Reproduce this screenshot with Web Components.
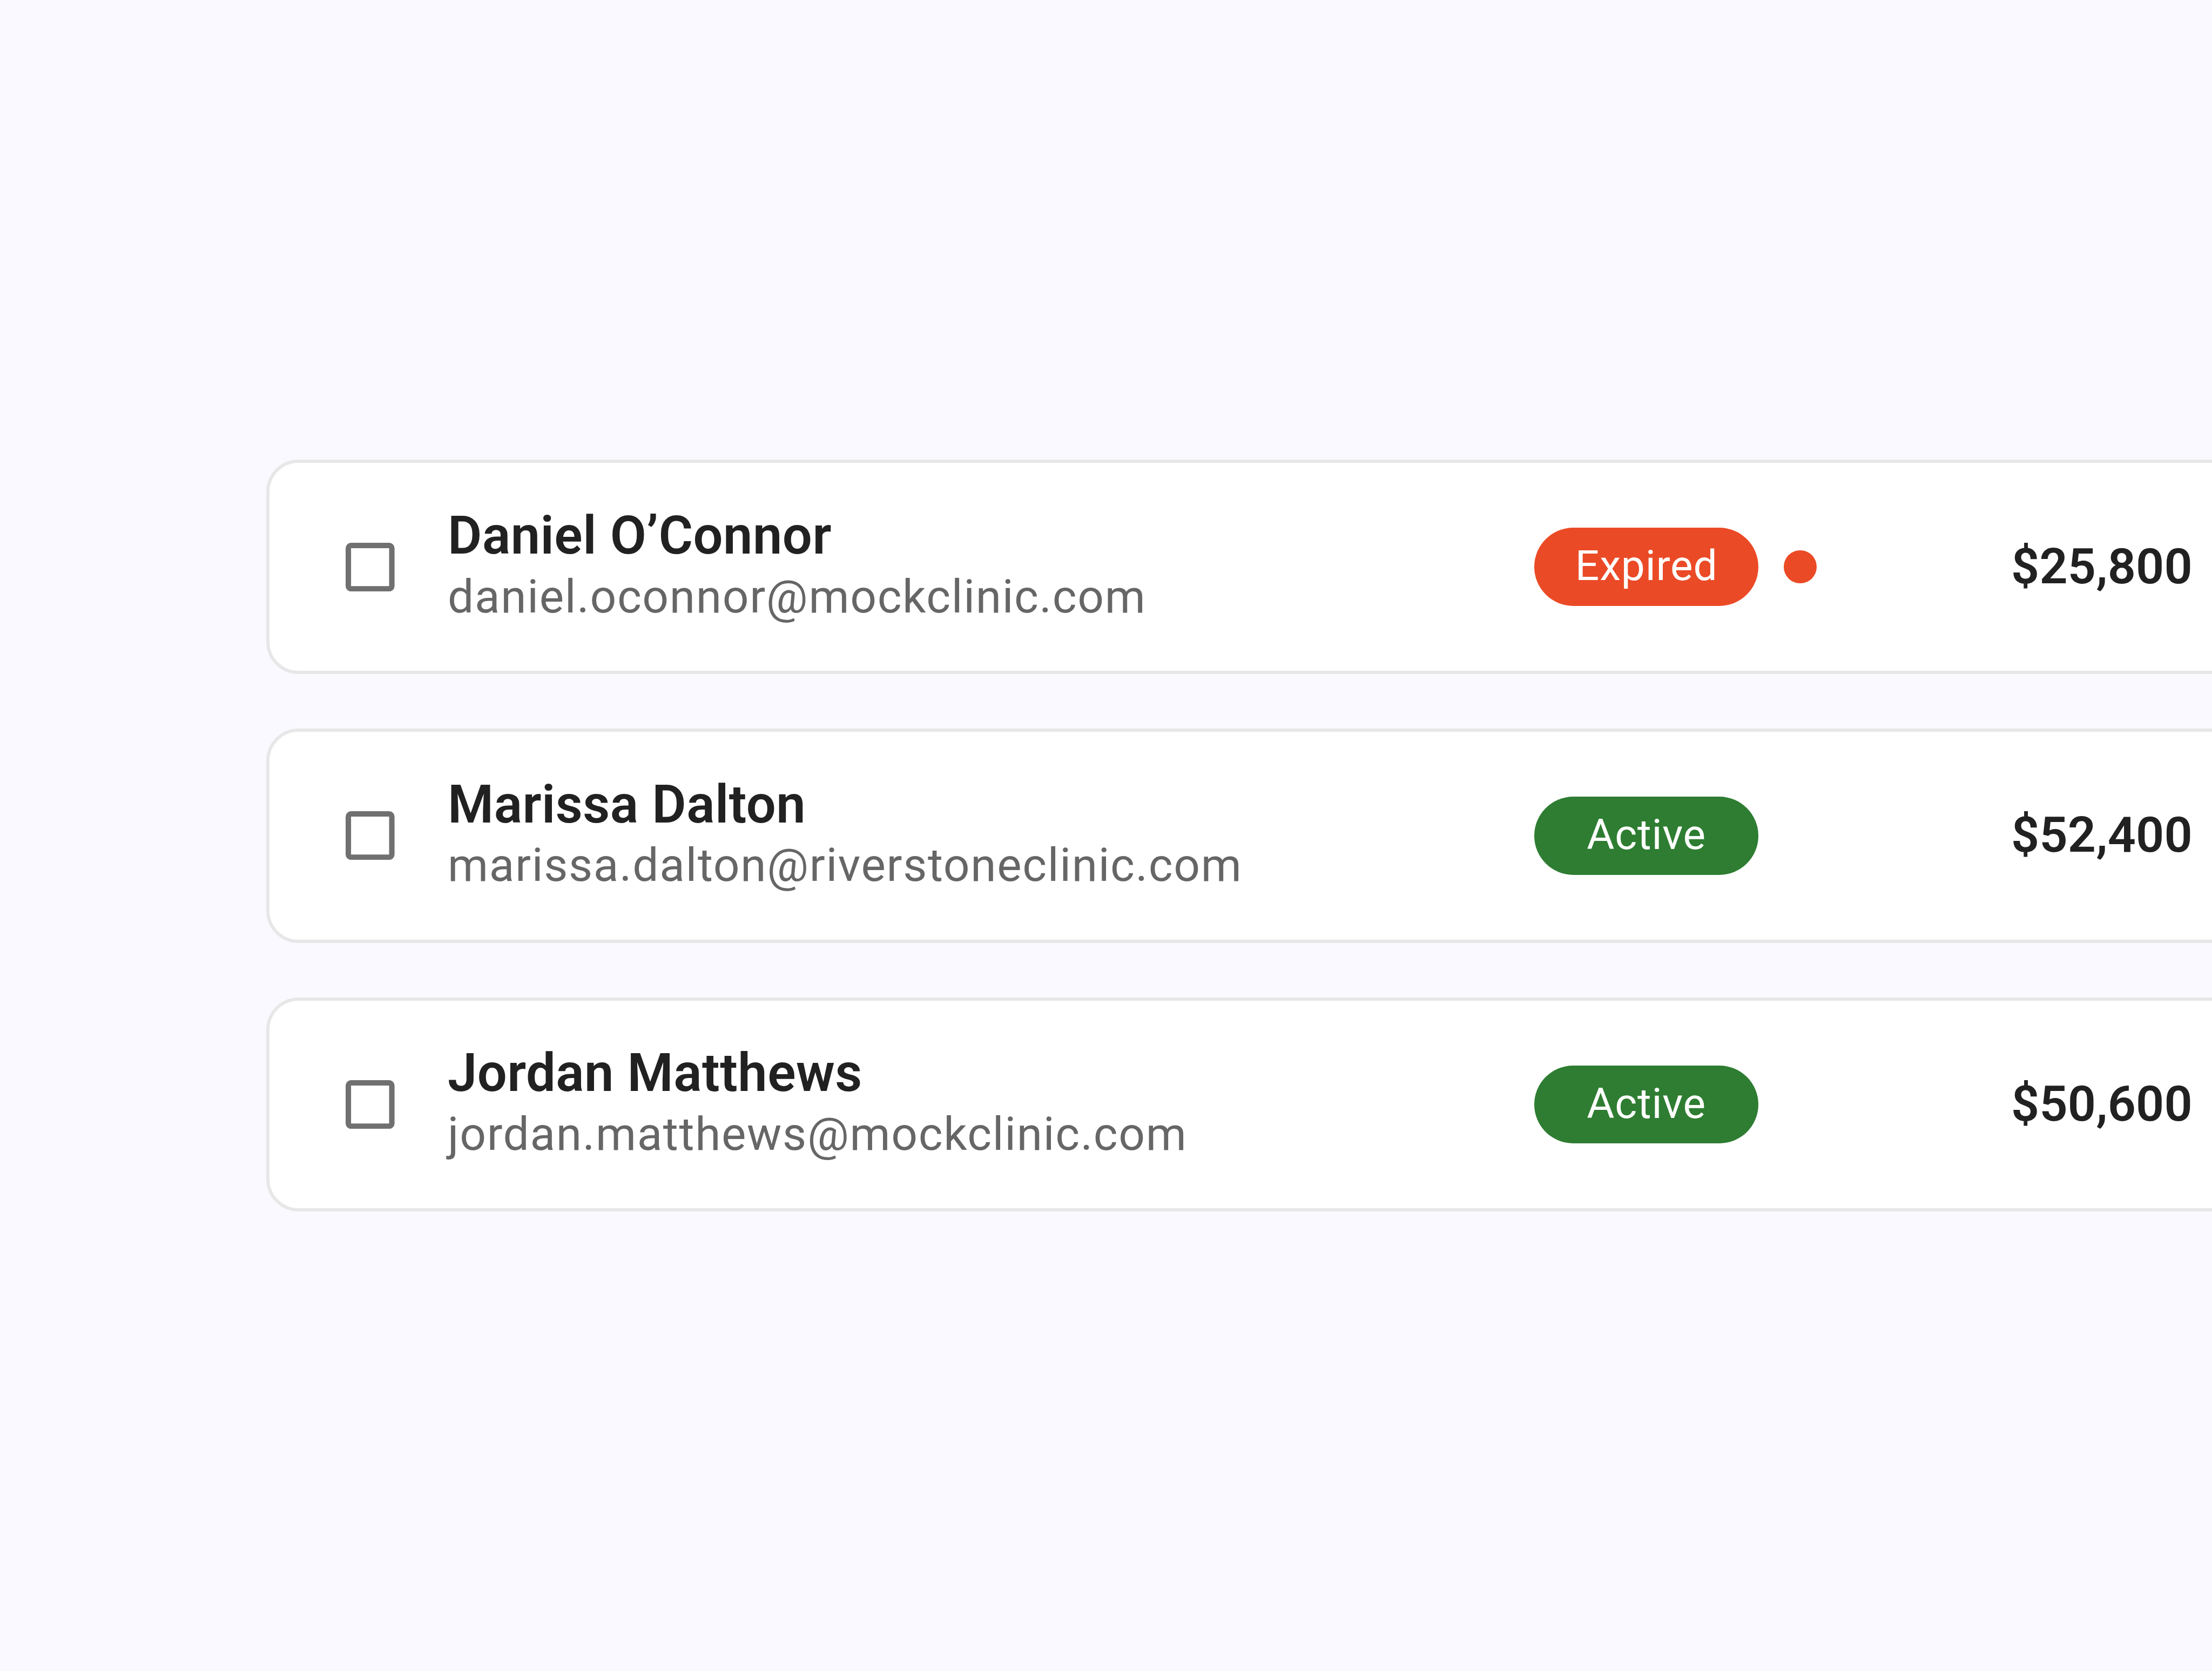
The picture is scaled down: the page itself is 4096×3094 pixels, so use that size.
<!DOCTYPE html>
<html lang="en">
<head>
<meta charset="utf-8">
<title>Patients</title>
<style>
html, body { margin: 0; height: 100%; }
body { background: #faf9ff; font-family: Roboto, "Liberation Sans", sans-serif; color: #212121; overflow: hidden; }
</style>
</head>
<body>
<client-list>
  <client-row>
    <client-info>Daniel O’Connor<span slot="email">daniel.oconnor@mockclinic.com</span></client-info>
    <status-chip slot="status" tone="expired" alert>Expired</status-chip>
    <span slot="amount">$25,800</span>
  </client-row>
  <client-row>
    <client-info>Marissa Dalton<span slot="email">marissa.dalton@riverstoneclinic.com</span></client-info>
    <status-chip slot="status" tone="active">Active</status-chip>
    <span slot="amount">$52,400</span>
  </client-row>
  <client-row>
    <client-info>Jordan Matthews<span slot="email">jordan.matthews@mockclinic.com</span></client-info>
    <status-chip slot="status" tone="active">Active</status-chip>
    <span slot="amount">$50,600</span>
  </client-row>
</client-list>
<script>
const define = (name, html) => customElements.define(name, class extends HTMLElement {
  constructor() {
    super();
    const t = document.createElement('template');
    t.innerHTML = html;
    this.attachShadow({ mode: 'open' }).append(t.content.cloneNode(true));
  }
});

define('client-list', `
<style>
  :host { display: flex; flex-direction: column; gap: 101.2px; box-sizing: border-box;
          height: 100vh; padding: 851.4px 0 0 493.4px; overflow: hidden; }
</style>
<slot></slot>`);

define('check-box', `
<style>
  :host { display: block; width: 90.6px; height: 90.2px; }
  svg { display: block; width: 100%; height: 100%; }
</style>
<svg viewBox="0 0 18 18" preserveAspectRatio="none"><path fill="#707070" fill-rule="evenodd" d="M2 0H16A2 2 0 0 1 18 2V16A2 2 0 0 1 16 18H2A2 2 0 0 1 0 16V2A2 2 0 0 1 2 0ZM2 2V16H16V2Z"/></svg>`);

define('client-row', `
<style>
  :host { display: grid; grid-template-columns: 189px 2011.9px 883.1px auto; align-items: center;
          box-sizing: border-box; flex: none; height: 396.5px; margin-right: -160px; padding-left: 140.7px;
          background: #fff; border: 6px solid #e7e7e7; border-radius: 59.7px; }
  .amount { font-size: 91.5px; font-weight: 600; line-height: 108px; letter-spacing: .09px; padding-bottom: 2px; }
</style>
<check-box></check-box>
<slot></slot>
<slot name="status"></slot>
<div class="amount"><slot name="amount"></slot></div>`);

define('client-info', `
<style>
  :host { display: flex; flex-direction: column; gap: 4.6px; padding-bottom: 6.7px; white-space: nowrap; }
  .name { font-size: 97.34px; line-height: 112px; font-weight: 600; letter-spacing: .49px; }
  .email { font-size: 85.66px; line-height: 104px; letter-spacing: 1.635px; color: #666; }
</style>
<div class="name"><slot></slot></div>
<div class="email"><slot name="email"></slot></div>`);

define('status-chip', `
<style>
  :host { display: flex; align-items: center; gap: 47px; }
  .chip { display: flex; align-items: center; justify-content: center; box-sizing: border-box;
          width: 415.3px; height: 144.4px; padding-bottom: 5px; border-radius: 73px; color: #fff;
          background: #2e7d32; font-size: 78.52px; line-height: 92px; letter-spacing: .73px; }
  :host([tone="expired"]) .chip { background: #eb4a26; }
  .dot { display: none; width: 60.5px; height: 60.5px; border-radius: 50%; background: #eb4a26; }
  :host([alert]) .dot { display: block; }
</style>
<div class="chip"><slot></slot></div>
<div class="dot"></div>`);
</script>
</body>
</html>
